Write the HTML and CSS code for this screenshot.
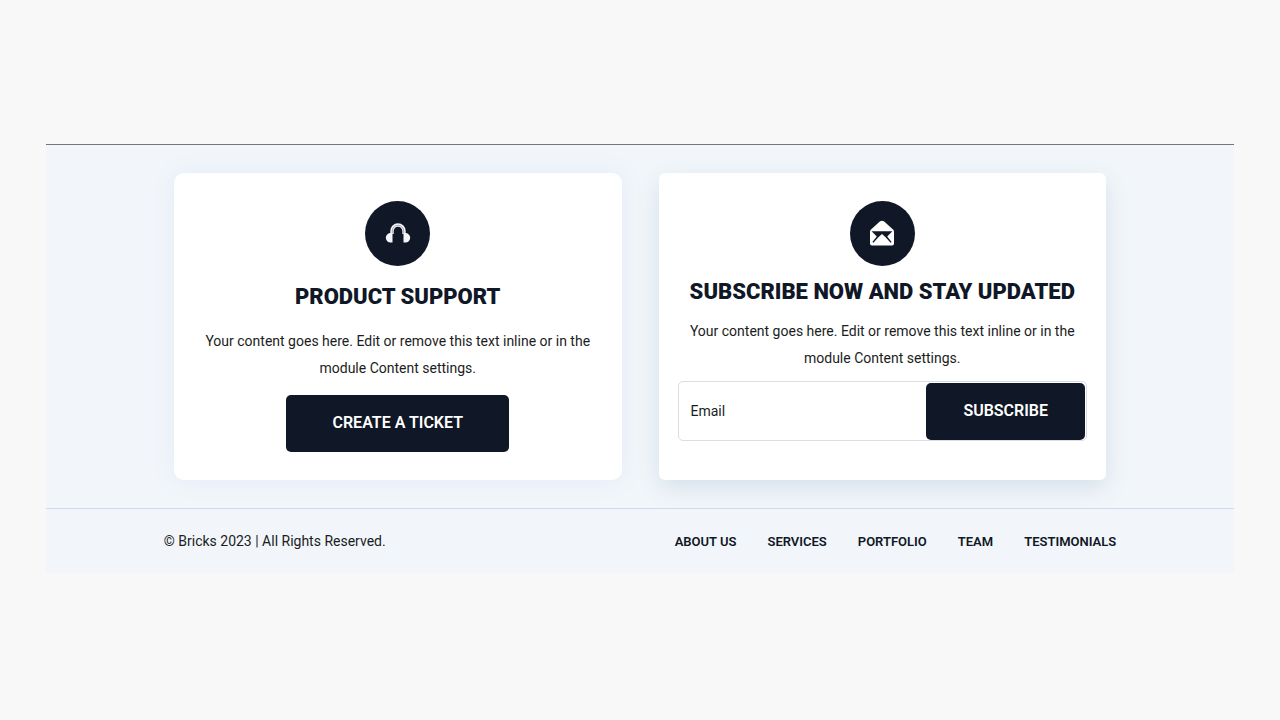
FILE: index.html
```html
<!DOCTYPE html>
<html lang="en">
<head>
<meta charset="utf-8">
<meta name="viewport" content="width=device-width, initial-scale=1">
<title>Bricks</title>
<link rel="stylesheet" href="styles.css">
</head>
<body>
<footer class="footer">
  <div class="cards">
    <section class="card card-support">
      <span class="badge">
        <svg class="icon" viewBox="0 0 28 28" aria-hidden="true">
          <path d="M8 15v-3a6 6 0 0 1 12 0v3" fill="none" stroke="#f4f6fa" stroke-width="3.4"/>
          <path d="M8.300 15v-3a5.700 5.700 0 0 1 11.400 0v3" fill="none" stroke="#101726" stroke-opacity=".5" stroke-width=".7"/>
          <path d="M8.500 14v9.600H6.600a4.800 4.800 0 0 1 0-9.600zM19.500 14v9.600h1.900a4.800 4.800 0 0 0 0-9.600z" fill="#f4f6fa"/>
        </svg>
      </span>
      <h2 class="title">PRODUCT SUPPORT</h2>
      <p class="text">Your content goes here. Edit or remove this text inline or in the module Content settings.</p>
      <button class="button button-wide" type="button">CREATE A TICKET</button>
    </section>
    <section class="card card-subscribe">
      <span class="badge">
        <svg class="icon" viewBox="0 0 28 28" aria-hidden="true">
          <path d="M2 12.500Q2 11.500 3 10.500L11.800 2.600Q14 .9 16.200 2.600L25 10.500Q26 11.500 26 12.500V24.500Q26 26.500 24 26.500H4Q2 26.500 2 24.500Z" fill="#fff"/>
          <path d="M3.600 12.200H24.400L19.200 17.500 23.600 22.900 22.600 23.700 17.600 18.300 14 15 10.400 18.300 5.400 23.700 4.400 22.900 8.800 17.500Z" fill="#101726"/>
        </svg>
      </span>
      <h2 class="title">SUBSCRIBE NOW AND STAY UPDATED</h2>
      <p class="text">Your content goes here. Edit or remove this text inline or in the module Content settings.</p>
      <form class="form">
        <input class="email" type="email" placeholder="Email" aria-label="Email">
        <button class="button" type="button">SUBSCRIBE</button>
      </form>
    </section>
  </div>
  <div class="bar">
    <p class="copyright">© Bricks 2023 | All Rights Reserved.</p>
    <nav class="nav" aria-label="Footer">
      <a href="#">ABOUT US</a>
      <a href="#">SERVICES</a>
      <a href="#">PORTFOLIO</a>
      <a href="#">TEAM</a>
      <a href="#">TESTIMONIALS</a>
    </nav>
  </div>
</footer>
</body>
</html>
```
FILE: styles.css
```css
* { box-sizing: border-box; }
body {
  margin: 0;
  min-height: 100vh;
  padding: 0 46px 4px;
  display: flex;
  align-items: center;
  background: #f8f8f8;
  color: #1a1d22;
  font: 14px/27px Roboto, sans-serif;
}
h2, p { margin: 0; }
.footer {
  width: 100%;
  background: #f2f6fa;
  border-top: 1px solid #74767a;
}
.cards {
  display: grid;
  grid-template-columns: 1fr 1fr;
  gap: 37px;
  max-width: 932px;
  margin: 0 auto;
  padding: 28px 0;
}
.card {
  display: flex;
  flex-direction: column;
  align-items: center;
  text-align: center;
  background: #fff;
}
.card-support {
  gap: 17px;
  padding: 28px;
  border-radius: 10px;
  box-shadow: 0 0 24px #e4eaf7;
}
.card-subscribe {
  gap: 12px;
  padding: 28px 19px;
  border-radius: 6px;
  box-shadow: 0 8px 24px #d5e0ea;
}
.badge {
  display: flex;
  align-items: center;
  justify-content: center;
  width: 65px;
  height: 65px;
  border-radius: 50%;
  background: #101726;
}
.icon { width: 28px; height: 28px; }
.title {
  color: #101726;
  font-size: 22px;
  font-weight: 900;
  line-height: 28px;
}
.button {
  height: 57px;
  padding: 0 37px;
  border: 0;
  border-radius: 5px;
  background: #101726;
  color: #fff;
  font: 600 16px/20px Roboto, sans-serif;
}
.button-wide {
  width: 223px;
  margin-top: -4px;
}
.form {
  display: flex;
  align-items: center;
  width: 100%;
  height: 60px;
  margin-top: -3px;
  padding: 1px 1px 0;
  border: 1px solid #d9dde5;
  border-radius: 5px;
}
.email {
  flex: 1;
  min-width: 0;
  height: 57px;
  padding: 0 11px;
  border: 0;
  background: transparent;
  color: inherit;
  font: inherit;
}
.email::placeholder { color: #1a1d22; opacity: 1; }
.bar {
  display: flex;
  align-items: center;
  justify-content: space-between;
  min-height: 65px;
  padding: 2px calc(10% - 1px) 0;
  border-top: 1px solid #d2d9e8;
}
.nav { display: flex; gap: 31px; }
.nav a {
  color: #101726;
  font-size: 13px;
  font-weight: 600;
  text-decoration: none;
}
```
